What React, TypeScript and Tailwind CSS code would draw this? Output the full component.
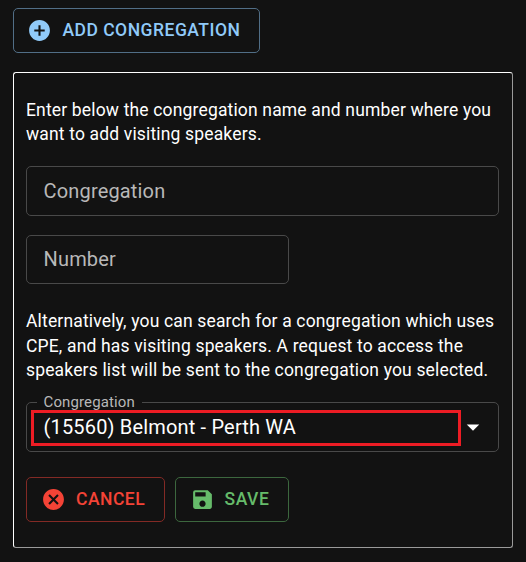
import { MdAddCircle, MdArrowDropDown, MdCancel, MdSave } from "react-icons/md";
import type { ReactNode } from "react";

function ActionButton({ className, icon, children }: { className: string; icon: ReactNode; children: ReactNode }) {
  return (
    <button
      type="button"
      className={`flex h-[45px] items-center gap-[10px] rounded-[5px] border text-[17.5px] leading-none font-medium tracking-[0.5px] whitespace-nowrap ${className}`}
    >
      {icon}
      <span>{children}</span>
    </button>
  );
}

function Field({ label, className }: { label: string; className: string }) {
  return (
    <div
      className={`flex items-center rounded-[5px] border border-[#494949] pl-[16.5px] text-[20px] leading-none tracking-[0.17px] text-[#b8b8b8] ${className}`}
    >
      {label}
    </div>
  );
}

export default function App() {
  return (
    <div className="h-[562px] w-[526px] overflow-hidden bg-[#121212] pt-2 pl-[13px] font-[Roboto,sans-serif] text-white">
      <ActionButton className="w-[247px] border-[#516e86] pl-[13.4px] text-[#90caf9]" icon={<MdAddCircle size={25} />}>
        ADD CONGREGATION
      </ActionButton>

      <section className="mt-[19px] flex h-[476px] w-[500px] flex-col rounded-[3px] border border-t-white border-r-[#9a9a9a] border-b-[#9a9a9a] border-l-white pt-[25px] pl-3">
        <p className="h-[48px] text-[17.5px] leading-[24px] tracking-[0.16px] whitespace-nowrap">
          Enter below the congregation name and number where you
          <br />
          want to add visiting speakers.
        </p>
        <Field label="Congregation" className="mt-[20px] h-[50px] w-[473px] shrink-0" />
        <Field label="Number" className="mt-[19px] h-[49px] w-[263px] shrink-0 pb-px" />
        <p className="mt-[25px] h-[72px] text-[17.5px] leading-[24.5px] tracking-[0.16px] whitespace-nowrap">
          Alternatively, you can search for a congregation which uses
          <br />
          CPE, and has visiting speakers. A request to access the
          <br />
          speakers list will be sent to the congregation you selected.
        </p>
        <div className="relative mt-[21px] flex h-[50px] w-[473px] shrink-0 rounded-[5px] border border-[#494949] pt-[7px] pl-1">
          <span className="absolute -top-[9px] left-[10px] bg-[#121212] pr-[7.5px] pl-[6.5px] text-[15px] leading-[17px] tracking-[0.12px] text-[#b8b8b8]">
            Congregation
          </span>
          <div className="relative flex h-[36px] w-[430px] items-center border-3 border-[#ed1c24] pb-[2px] pl-[9.5px] text-[20px] leading-none tracking-[0.17px]">
            (15560) Belmont - Perth WA
          </div>
          <MdArrowDropDown size={30} className="mt-[2px] -ml-[3px]" />
        </div>
        <div className="mt-[25px] flex gap-[10px]">
          <ActionButton className="w-[139px] border-[#832a25] pl-[14px] text-[#f44336]" icon={<MdCancel size={25} />}>
            CANCEL
          </ActionButton>
          <ActionButton className="w-[114px] border-[#3c673e] pl-[13.6px] text-[#66bb6a]" icon={<MdSave size={25} />}>
            SAVE
          </ActionButton>
        </div>
      </section>
    </div>
  );
}
